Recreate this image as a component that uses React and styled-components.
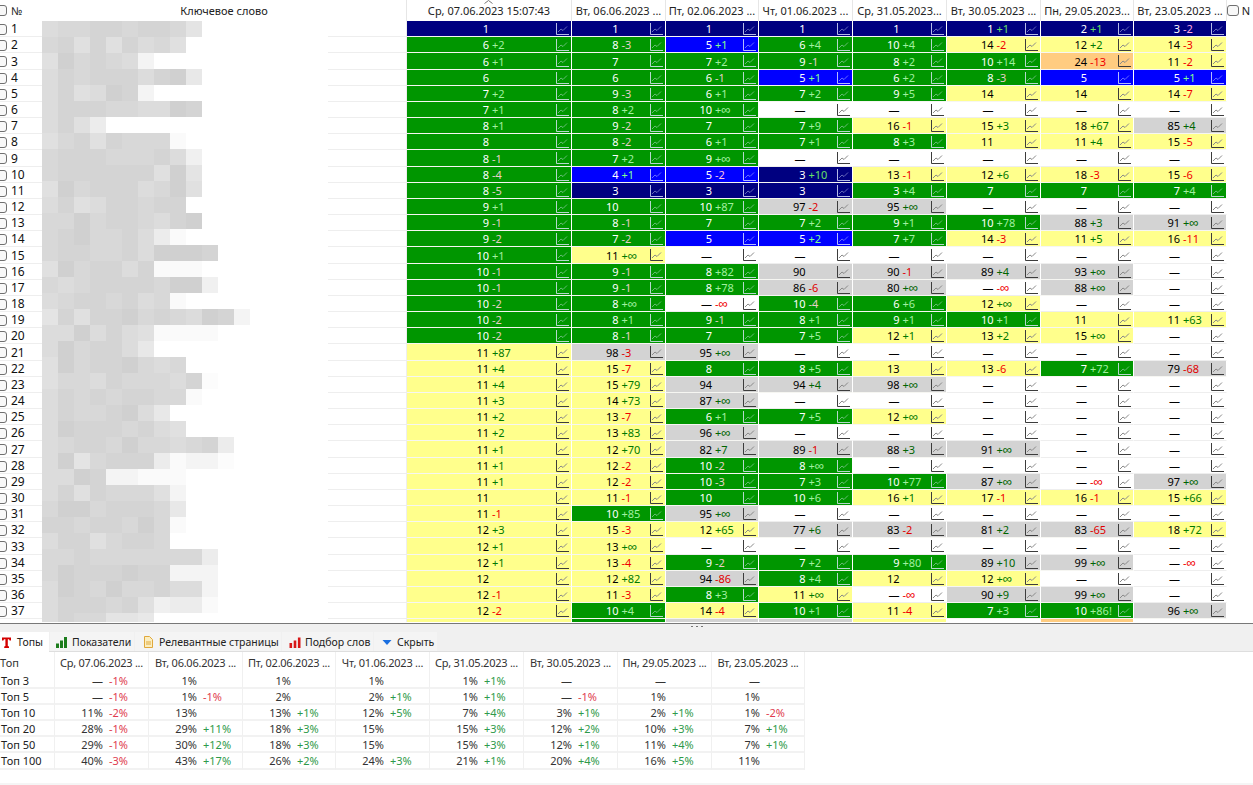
import React from 'react';
import styled, { createGlobalStyle } from 'styled-components';

const Global = createGlobalStyle`
  html, body { margin: 0; padding: 0; background: #fff; overflow: hidden; }
  body { font-family: "Noto Sans", "Liberation Sans", sans-serif; font-size: 11px; color: #111; }
`;

const WIDTHS = [165, 94, 93, 94, 94, 94, 93, 93];
const COLS = `42px 365px ${WIDTHS.map((w) => `${w}px`).join(' ')} 1fr`;
const DATES = [
  'Ср, 07.06.2023 15:07:43', 'Вт, 06.06.2023 ...', 'Пт, 02.06.2023 ...', 'Чт, 01.06.2023 ...',
  'Ср, 31.05.2023...', 'Вт, 30.05.2023 ...', 'Пн, 29.05.2023...', 'Вт, 23.05.2023 ...',
];

const ROWS = [
  '1n 1n 1n 1n 1n 1+1n 2+1n 3-2n',
  '6+2g 8-3g 5+1b 6+4g 10+4g 14-2y 12+2y 14-3y',
  '6+1g 7g 7+2g 9-1g 8+2g 10+14g 24-13o 11-2y',
  '6g 6g 6-1g 5+1b 6+2g 8-3g 5b 5+1b',
  '7+2g 9-3g 6+1g 7+2g 9+5g 14y 14y 14-7y',
  '7+1g 8+2g 10+∞g —w —w —w —w —w',
  '8+1g 9-2g 7g 7+9g 16-1y 15+3y 18+67y 85+4s',
  '8g 8-2g 6+1g 7+1g 8+3g 11y 11+4y 15-5y',
  '8-1g 7+2g 9+∞g —w —w —w —w —w',
  '8-4g 4+1b 5-2b 3+10n 13-1y 12+6y 18-3y 15-6y',
  '8-5g 3n 3n 3n 3+4g 7g 7g 7+4g',
  '9+1g 10g 10+87g 97-2s 95+∞s —w —w —w',
  '9-1g 8-1g 7g 7+2g 9+1g 10+78g 88+3s 91+∞s',
  '9-2g 7-2g 5b 5+2b 7+7g 14-3y 11+5y 16-11y',
  '10+1g 11+∞y —w —w —w —w —w —w',
  '10-1g 9-1g 8+82g 90s 90-1s 89+4s 93+∞s —w',
  '10-1g 9-1g 8+78g 86-6s 80+∞s —-∞w 88+∞s —w',
  '10-2g 8+∞g —-∞w 10-4g 6+6g 12+∞y —w —w',
  '10-2g 8+1g 9-1g 8+1g 9+1g 10+1g 11y 11+63y',
  '10-2g 8-1g 7g 7+5g 12+1y 13+2y 15+∞y —w',
  '11+87y 98-3s 95+∞s —w —w —w —w —w',
  '11+4y 15-7y 8g 8+5g 13y 13-6y 7+72g 79-68s',
  '11+4y 15+79y 94s 94+4s 98+∞s —w —w —w',
  '11+3y 14+73y 87+∞s —w —w —w —w —w',
  '11+2y 13-7y 6+1g 7+5g 12+∞y —w —w —w',
  '11+2y 13+83y 96+∞s —w —w —w —w —w',
  '11+1y 12+70y 82+7s 89-1s 88+3s 91+∞s —w —w',
  '11+1y 12-2y 10-2g 8+∞g —w —w —w —w',
  '11+1y 12-2y 10-3g 7+3g 10+77g 87+∞s —-∞w 97+∞s',
  '11y 11-1y 10g 10+6g 16+1y 17-1y 16-1y 15+66y',
  '11-1y 10+85g 95+∞s —w —w —w —w —w',
  '12+3y 15-3y 12+65y 77+6s 83-2s 81+2s 83-65s 18+72y',
  '12+1y 13+∞y —w —w —w —w —w —w',
  '12+1y 13-4y 9-2g 7+2g 9+80g 89+10s 99+∞s —-∞w',
  '12y 12+82y 94-86s 8+4g 12y 12+∞y —w —w',
  '12-1y 11-3y 8+3g 11+∞y —-∞w 90+9s 99+∞s —w',
  '12-2y 10+4g 14-4y 10+1g 11-4y 7+3g 10+86!g 96+∞s',
  'y g s s y w o w',
];

const MOSAIC = [
  '3221121125', '214141324', '4021239', '3121113106', '3143019', '3111223301', '3147',
  '42141222a', '2111222138', '2111111405', '4021113204', '314311211', '2202112310',
  '21022137a', '21122130001', '4021131aaa', '23211112008', '32112132a', '5141102123019',
  '3303134aaaa', '3021136', '402110232', '4223122231b', '312121122a', '31221036',
  '301112134', '321120223217', '30521117a99b', '330199aaa', '314122249', '200211126',
  '11211202a', '31142112', '22122222227', '20111011999', '30120221339', '3111214877a', '3122556',
];
const GREY = { 0: 208, 1: 212, 2: 216, 3: 220, 4: 224, 5: 228, 6: 232, 7: 236, 8: 240, 9: 244, a: 250, b: 252 };

const TOPS = [
  ['Топ 3', '— -1%', '1%', '1%', '1%', '1% +1%', '—', '—', '—'],
  ['Топ 5', '— -1%', '1% -1%', '2%', '2% +1%', '1% +1%', '— -1%', '1%', '1%'],
  ['Топ 10', '11% -2%', '13%', '13% +1%', '12% +5%', '7% +4%', '3% +1%', '2% +1%', '1% -2%'],
  ['Топ 20', '28% -1%', '29% +11%', '18% +3%', '15%', '15% +3%', '12% +2%', '10% +3%', '7% +1%'],
  ['Топ 50', '29% -1%', '30% +12%', '18% +3%', '15%', '15% +3%', '12% +1%', '11% +4%', '7% +1%'],
  ['Топ 100', '40% -3%', '43% +17%', '26% +2%', '24% +3%', '21% +1%', '20% +4%', '16% +5%', '11%'],
];
const BOTTOM_DATES = [
  'Ср, 07.06.2023 ...', 'Вт, 06.06.2023 ...', 'Пт, 02.06.2023 ...', 'Чт, 01.06.2023 ...',
  'Ср, 31.05.2023 ...', 'Вт, 30.05.2023 ...', 'Пн, 29.05.2023 ...', 'Вт, 23.05.2023 ...',
];

const BG = { n: '#000080', g: '#009600', b: '#0000ff', y: '#ffff8c', o: '#ffcc80', s: '#d3d3d3', w: '#ffffff' };
const isDark = (t) => t === 'n' || t === 'g' || t === 'b';
const deltaColor = (t, d) => {
  const up = d[0] === '+';
  if (t === 'n') return up ? '#66e066' : '#ffa8e0';
  if (t === 'g') return up ? '#a0f0a0' : '#e8d0c8';
  if (t === 'b') return up ? '#80ff90' : '#ffc0e0';
  if (t === 's') return up ? '#006400' : '#e00000';
  return up ? '#007800' : '#f00000';
};
const rowHeight = (i) => Math.round(16.17 * (i + 1)) - Math.round(16.17 * i);

const Page = styled.div`
  width: 1253px;
  height: 785px;
  display: flex;
  flex-direction: column;
  overflow: hidden;
`;
const TopPane = styled.div`
  position: relative;
  height: 622px;
  flex: none;
  overflow: hidden;
`;
const HeadRow = styled.div`
  display: grid;
  grid-template-columns: ${COLS};
  height: 21px;
`;
const HeadCell = styled.div`
  position: relative;
  box-sizing: border-box;
  display: flex;
  align-items: center;
  justify-content: ${(p) => (p.$left ? 'flex-start' : 'center')};
  border-right: ${(p) => (p.$plain ? 'none' : '1px solid #e6e6e6')};
  white-space: nowrap;
  color: #222;
`;
const NumHead = styled.div`
  display: flex;
  align-items: center;
  gap: 4px;
`;
const SortCaret = styled.svg`
  position: absolute;
  top: 0;
  left: 77px;
  width: 9px;
  height: 4px;
`;
const Row = styled.div`
  display: grid;
  grid-template-columns: ${COLS};
  grid-template-rows: ${(p) => p.$h}px;
  height: ${(p) => p.$h}px;
`;
const NumCell = styled.div`
  box-sizing: border-box;
  display: flex;
  align-items: center;
  gap: 4px;
  padding-top: 1px;
  border-bottom: 1px solid #eeeeee;
  font-size: 12px;
  line-height: 14px;
  color: #111;
`;
const Check = styled.span`
  box-sizing: border-box;
  flex: none;
  display: block;
  width: 12px;
  height: 11px;
  margin-left: ${(p) => (p.$clip ? '-5px' : '0')};
  border: 1px solid #707070;
  border-radius: 3px;
  background: #f8f8f8;
`;
const KeywordCell = styled.div`
  box-sizing: border-box;
  border-bottom: 1px solid #eeeeee;
  border-right: 1px solid #eeeeee;
`;
const Cell = styled.div`
  position: relative;
  box-sizing: border-box;
  display: grid;
  grid-template-columns: 50% 1fr;
  column-gap: 3px;
  align-items: center;
  padding-top: 1px;
  font-size: 11px;
  line-height: 14px;
  background: ${(p) => BG[p.$tone]};
  color: ${(p) => (isDark(p.$tone) ? '#ffffff' : '#000000')};
  border-right: 1px solid #ffffff;
  border-bottom: 1px solid ${(p) => (p.$tone === 'w' ? '#eeeeee' : '#f6f6f2')};
`;
const Value = styled.span`
  text-align: right;
  white-space: nowrap;
`;
const Delta = styled.span`
  white-space: nowrap;
  color: ${(p) => p.$color};
`;
const Inf = styled.span`
  font-size: 13px;
  line-height: 11px;
`;
const ChartSvg = styled.svg`
  position: absolute;
  top: 2px;
  right: 2px;
  width: 13px;
  height: 12px;
`;
const Spacer = styled.div``;
const Mosaic = styled.div`
  position: absolute;
  top: 21px;
  left: 42px;
  width: 286px;
  bottom: 0;
  background: #ffffff;
  overflow: hidden;
`;
const MosaicRow = styled.div`
  display: flex;
  height: 16px;
`;
const Tile = styled.div`
  width: 16px;
  height: 16px;
  flex: none;
`;
const Splitter = styled.div`
  position: relative;
  flex: none;
  height: 1px;
  background: #787878;
  border-top: 1px solid #ffffff;
`;
const Grip = styled.div`
  position: absolute;
  top: 3px;
  left: 691px;
  width: 12px;
  height: 1px;
  background: repeating-linear-gradient(90deg, #777 0 2px, transparent 2px 5px);
`;
const TabBar = styled.div`
  flex: none;
  box-sizing: border-box;
  height: 28px;
  padding-top: 8px;
  display: flex;
  gap: 1px;
  background: #f0f0f0;
  border-bottom: 1px solid #dedede;
`;
const Tab = styled.div`
  box-sizing: border-box;
  width: ${(p) => p.$w}px;
  height: ${(p) => (p.$active ? 20 : 19)}px;
  display: flex;
  align-items: center;
  gap: ${(p) => p.$gap}px;
  padding-left: ${(p) => p.$pad}px;
  background: ${(p) => (p.$active ? '#ffffff' : '#f4f4f4')};
  font-size: 10.5px;
  color: #222;
  white-space: nowrap;
`;
const TabIcon = styled.svg`
  flex: none;
  width: 12px;
  height: 12px;
`;
const BottomPane = styled.div`
  flex: 1;
  background: #fff;
`;
const BottomGrid = styled.div`
  display: grid;
  width: 805px;
  grid-template-columns: 55px 94px 94px 93px 94px 94px 94px 94px 93px;
  grid-template-rows: 21px repeat(5, 16px) 17px;
`;
const TopHead = styled.div`
  box-sizing: border-box;
  display: flex;
  align-items: center;
  justify-content: ${(p) => (p.$left ? 'flex-start' : 'center')};
  border-right: 1px solid #f0f0f0;
  color: #333;
  letter-spacing: ${(p) => (p.$left ? '0' : '-0.25px')};
  white-space: nowrap;
`;
const TopLabel = styled.div`
  box-sizing: border-box;
  padding: 1px 0 0 1px;
  line-height: 14px;
  color: #222;
  border-right: 1px solid #f0f0f0;
  border-bottom: 2px solid #f2f2f2;
`;
const TopCell = styled.div`
  box-sizing: border-box;
  display: grid;
  grid-template-columns: 48px 1fr;
  column-gap: 6px;
  padding-top: 1px;
  line-height: 14px;
  color: #333;
  border-right: 1px solid #f0f0f0;
  border-bottom: 2px solid #f2f2f2;
`;
const TopDelta = styled.span`
  white-space: nowrap;
  color: ${(p) => (p.$up ? '#2f9a4a' : '#e03c50')};
`;
const FooterLine = styled.div`
  flex: none;
  height: 2px;
  background: #f5f5f5;
`;

function ChartIcon({ tone }) {
  const dark = isDark(tone);
  const axis = dark ? 'rgba(225,232,255,.8)' : '#3c3c3c';
  const line = dark ? 'rgba(225,232,255,.45)' : '#8a8a8a';
  return (
    <ChartSvg viewBox="0 0 13 12" fill="none">
      <path d="M.5 0v11.5H13" stroke={axis} />
      <path d="M2 9l3-3 2 1.5L11 3.5" stroke={line} />
    </ChartSvg>
  );
}

function DataCell({ code }) {
  const m = code.match(/^(\d+|—)?([+-](?:\d+!?|∞))?([a-z])$/);
  const [, value, delta, tone] = m;
  return (
    <Cell $tone={tone}>
      <Value>{value}</Value>
      {delta ? (
        <Delta $color={deltaColor(tone, delta)}>
          {delta.endsWith('∞') ? (
            <>
              {delta[0]}
              <Inf>∞</Inf>
            </>
          ) : (
            delta
          )}
        </Delta>
      ) : (
        <Spacer />
      )}
      {value ? <ChartIcon tone={tone} /> : null}
    </Cell>
  );
}

function TopValue({ text }) {
  const [value, delta] = text.split(' ');
  return (
    <TopCell>
      <Value>{value}</Value>
      {delta ? <TopDelta $up={delta[0] === '+'}>{delta}</TopDelta> : <Spacer />}
    </TopCell>
  );
}

const TABS = [
  {
    label: 'Топы', w: 49, pad: 1, gap: 4, active: true,
    icon: <path d="M1 1.5h9v3H8.6L8 3.2H6.8V10l1.2.5V12H3.2v-1.5L4.4 10V3.2H3L2.4 4.5H1z" fill="#d40000" />,
  },
  {
    label: 'Показатели', w: 84, pad: 5, gap: 5,
    icon: <path d="M1 7.5h3V12H1zM5 4.5h3V12H5zM9 1h3v11H9z" fill="#1d7d1d" />,
  },
  {
    label: 'Релевантные страницы', w: 146, pad: 7, gap: 5,
    icon: <path d="M2.5.5h5l3 3v8h-8zM4 6h5M4 8h5" fill="#fbeec0" stroke="#e0a83c" />,
  },
  {
    label: 'Подбор слов', w: 91, pad: 7, gap: 4,
    icon: <path d="M.5 7h2.6v5H.5zM4.7 4.5h2.6V12H4.7zM8.9 1.5h2.6V12H8.9z" fill="#d81818" />,
  },
  {
    label: 'Скрыть', w: 63, pad: 7, gap: 4,
    icon: <path d="M1.5 4h9L6 9z" fill="#1a6fe0" />,
  },
];

export default function App() {
  return (
    <Page>
      <Global />
      <TopPane>
        <HeadRow>
          <HeadCell $left $plain>
            <NumHead>
              <Check $clip />№
            </NumHead>
          </HeadCell>
          <HeadCell>Ключевое слово</HeadCell>
          {DATES.map((d, i) => (
            <HeadCell key={d}>
              {i === 0 ? (
                <SortCaret viewBox="0 0 9 4" fill="none">
                  <path d="M.5 3.5l4-3 4 3" stroke="#777" />
                </SortCaret>
              ) : null}
              {d}
            </HeadCell>
          ))}
          <HeadCell $left $plain>
            <Check />
            &nbsp;N
          </HeadCell>
        </HeadRow>
        {ROWS.map((row, i) => (
          <Row key={i} $h={rowHeight(i)}>
            <NumCell>
              <Check $clip />
              {i < 37 ? i + 1 : ''}
            </NumCell>
            <KeywordCell />
            {row.split(' ').map((code, j) => (
              <DataCell key={j} code={code} />
            ))}
            <Spacer />
          </Row>
        ))}
        <Mosaic>
          {MOSAIC.map((line, i) => (
            <MosaicRow key={i}>
              {line.split('').map((c, j) => {
                const g = GREY[c];
                return <Tile key={j} style={{ background: `rgb(${g},${g},${g})` }} />;
              })}
            </MosaicRow>
          ))}
        </Mosaic>
      </TopPane>
      <Splitter>
        <Grip />
      </Splitter>
      <TabBar>
        {TABS.map((t) => (
          <Tab key={t.label} $w={t.w} $pad={t.pad} $gap={t.gap} $active={t.active}>
            <TabIcon viewBox="0 0 12 12">{t.icon}</TabIcon>
            {t.label}
          </Tab>
        ))}
      </TabBar>
      <BottomPane>
        <BottomGrid>
          <TopHead $left>Топ</TopHead>
          {BOTTOM_DATES.map((d) => (
            <TopHead key={d}>{d}</TopHead>
          ))}
          {TOPS.map(([label, ...vals]) => (
            <React.Fragment key={label}>
              <TopLabel>{label}</TopLabel>
              {vals.map((v, i) => (
                <TopValue key={i} text={v} />
              ))}
            </React.Fragment>
          ))}
        </BottomGrid>
      </BottomPane>
      <FooterLine />
    </Page>
  );
}
